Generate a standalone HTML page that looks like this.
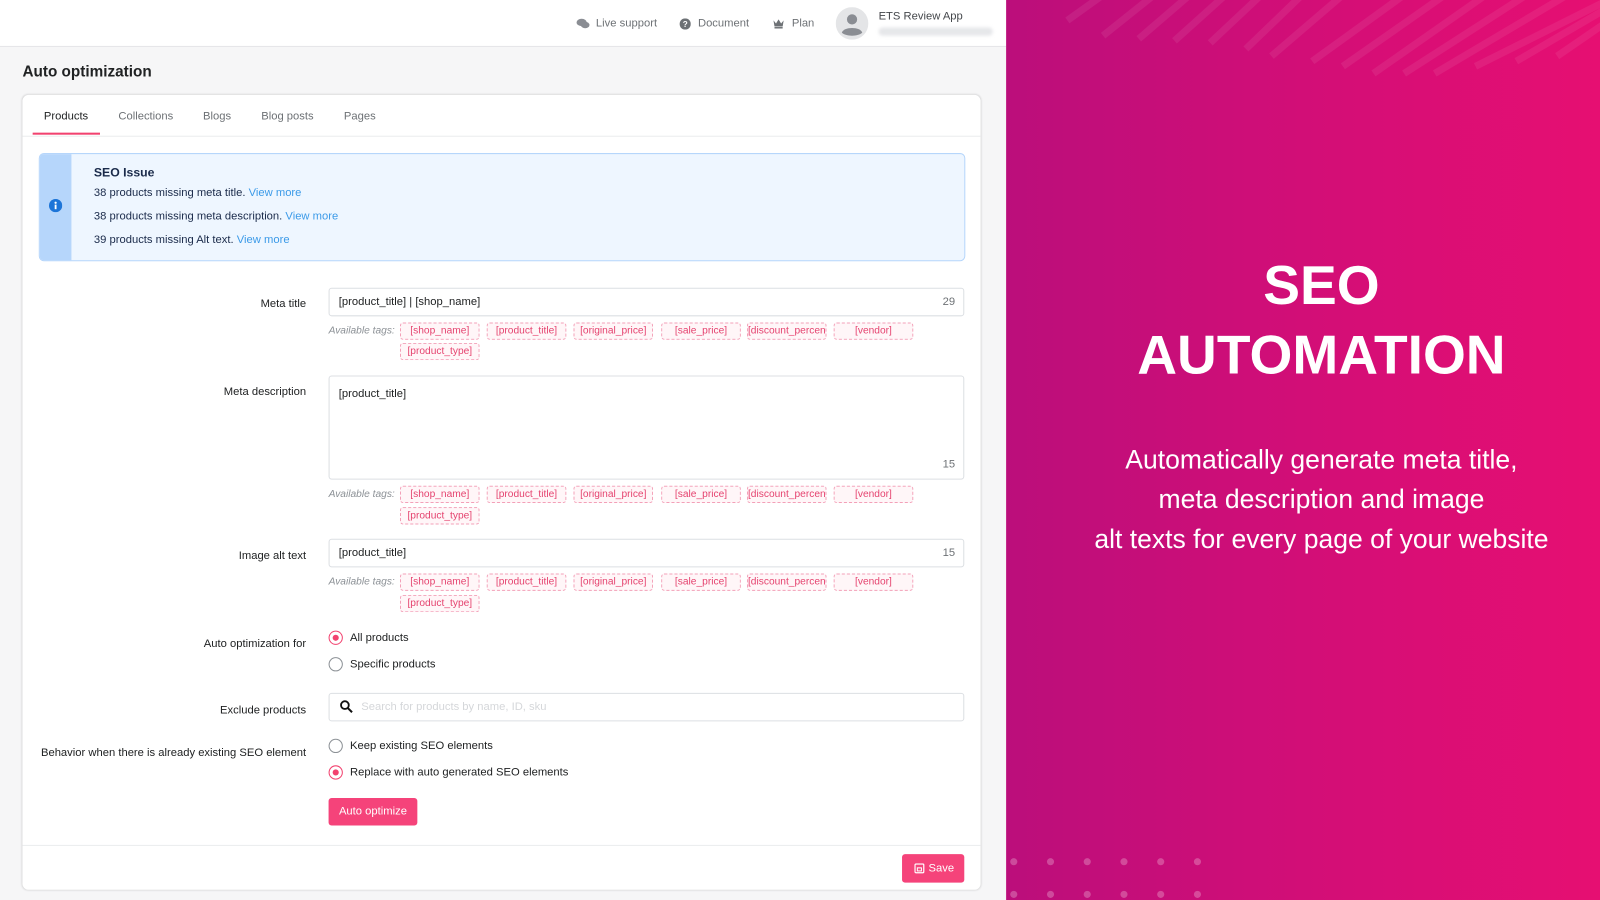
<!DOCTYPE html>
<html><head><meta charset="utf-8">
<style>
*{box-sizing:border-box;margin:0;padding:0}
html,body{width:1600px;height:900px;overflow:hidden;background:#f6f6f7}
#w{position:absolute;left:0;top:0;width:1568px;height:882px;transform:scale(1.020408);transform-origin:0 0;font-family:"Liberation Sans",sans-serif;color:#202223;font-size:11px}
.abs{position:absolute}
.hdr{left:0;top:0;width:986px;height:46px;background:#fff;border-bottom:1px solid #e5e5e8}
.hdr .it{position:absolute;top:17px;color:#6d7175;font-size:11px}
.card{left:22px;top:93px;width:939px;height:779px;background:#fff;border-radius:6px;box-shadow:0 0 2px rgba(0,0,0,.18)}
.tab{position:absolute;top:15px;font-size:11px;color:#6d7175}
.lbl{position:absolute;right:1268px;font-size:11px;color:#202223;text-align:right;white-space:nowrap}
.inp{position:absolute;left:322px;width:623px;border:1px solid #dcdfe3;border-radius:3px;background:#fff;font-size:11px;padding:7px 9px}
.cnt{position:absolute;right:8px;color:#6d7175}
.tags{position:absolute;left:322px;width:600px}
.tags i{position:absolute;left:0;top:3px;color:#8c9196;font-size:10px}
.tg{position:absolute;width:78px;height:17px;border:1px dashed #f3a0b8;border-radius:3px;background:#fff6f8;color:#e5436f;font-size:10px;text-align:center;line-height:15px;overflow:hidden;white-space:nowrap}
.rad{position:absolute;left:322px;font-size:11px}
.rad b{position:absolute;left:0;top:0;width:14px;height:14px;border:1px solid #8c9196;border-radius:50%;background:#fff}
.rad b.on{border:1.5px solid #f2426f}
.rad b.on:after{content:"";position:absolute;left:2.5px;top:2.5px;width:6px;height:6px;border-radius:50%;background:#f2426f}
.rad span{position:absolute;left:21px;top:1px;white-space:nowrap}
.btn{position:absolute;background:#f5437a;color:#fff;border-radius:3px;font-size:11px;text-align:center}
.pink{left:986px;top:0;width:582px;height:882px;background:linear-gradient(90deg,#bb0e7b,#d20e77 50%,#e60f72);overflow:hidden;color:#fff;text-align:center}
.dot{position:absolute;width:7px;height:7px;border-radius:50%;background:rgba(255,255,255,.25)}
</style></head><body><div id="w">
<div class="abs hdr">
  <svg class="abs" style="left:565px;top:18px" width="13" height="11" viewBox="0 0 13 11"><ellipse cx="5" cy="4" rx="5" ry="3.6" fill="#8a8d93"/><ellipse cx="8.5" cy="6.5" rx="4.2" ry="3.2" fill="#8a8d93"/></svg>
  <div class="it" style="left:584px">Live support</div>
  <svg class="abs" style="left:666px;top:18px" width="11" height="11" viewBox="0 0 11 11"><circle cx="5.5" cy="5.5" r="5.5" fill="#6d7175"/><text x="5.5" y="8.5" font-size="8" font-weight="bold" fill="#fff" text-anchor="middle" font-family="Liberation Sans">?</text></svg>
  <div class="it" style="left:684px">Document</div>
  <svg class="abs" style="left:757px;top:18px" width="12" height="10" viewBox="0 0 12 10"><path d="M1 2l2.5 3L6 1l2.5 4L11 2l-1 6H2z" fill="#6d7175"/><rect x="2" y="8.5" width="8" height="1.5" fill="#6d7175"/></svg>
  <div class="it" style="left:776px">Plan</div>
  <svg class="abs" style="left:819px;top:7px" width="32" height="32" viewBox="0 0 32 32"><circle cx="16" cy="16" r="16" fill="#e4e5e7"/><circle cx="16" cy="12" r="5" fill="#8a8d93"/><path d="M6 25c2-6 18-6 20 0c-4 4-16 4-20 0z" fill="#8a8d93"/></svg>
  <div class="abs" style="left:861px;top:10px;font-size:11px;color:#44474b">ETS Review App</div>
  <div class="abs" style="left:861px;top:27px;width:112px;height:8px;background:#e6e7ea;border-radius:4px;filter:blur(1.5px)"></div>
</div>
<div class="abs" style="left:22px;top:62px;font-size:15px;font-weight:bold;color:#202223">Auto optimization</div>
<div class="abs card">
  <div class="tab" style="left:21px;color:#202223">Products</div>
  <div class="abs" style="left:10px;top:37px;width:66px;height:2px;background:#f2426f"></div>
  <div class="tab" style="left:94px">Collections</div>
  <div class="tab" style="left:177px">Blogs</div>
  <div class="tab" style="left:234px">Blog posts</div>
  <div class="tab" style="left:315px">Pages</div>
  <div class="abs" style="left:0;top:40px;width:939px;height:1px;background:#ebecee"></div>
  <div class="abs" style="left:0;top:735px;width:939px;height:1px;background:#ebecee"></div>
</div>
<div class="abs" style="left:38px;top:150px;width:908px;height:106px;border:1px solid #b6d6fb;border-radius:5px;background:#eef6ff;overflow:hidden">
  <div class="abs" style="left:0;top:0;width:31px;height:106px;background:#b6d6fb"></div>
  <svg class="abs" style="left:9px;top:44px" width="13" height="13" viewBox="0 0 13 13"><circle cx="6.5" cy="6.5" r="6.5" fill="#1d75d8"/><rect x="5.6" y="5.5" width="1.8" height="4.5" fill="#fff"/><circle cx="6.5" cy="3.7" r="1.1" fill="#fff"/></svg>
  <div class="abs" style="left:53px;top:11px;font-size:12px;font-weight:bold;color:#1a2a4a">SEO Issue</div>
  <div class="abs" style="left:53px;top:32px;color:#1a2a4a">38 products missing meta title. <span style="color:#3b9ae8">View more</span></div>
  <div class="abs" style="left:53px;top:55px;color:#1a2a4a">38 products missing meta description. <span style="color:#3b9ae8">View more</span></div>
  <div class="abs" style="left:53px;top:78px;color:#1a2a4a">39 products missing Alt text. <span style="color:#3b9ae8">View more</span></div>
</div>

<div class="lbl" style="top:292px">Meta title</div>
<div class="inp" style="top:282px;height:28px">[product_title] | [shop_name]<span class="cnt" style="top:7px">29</span></div>
<div class="tags" style="top:316px"><i>Available tags:</i>
<div class="tg" style="left:70px">[shop_name]</div><div class="tg" style="left:155px">[product_title]</div><div class="tg" style="left:240px">[original_price]</div><div class="tg" style="left:326px">[sale_price]</div><div class="tg" style="left:410px">[discount_percent</div><div class="tg" style="left:495px">[vendor]</div><div class="tg" style="left:70px;top:20px">[product_type]</div></div>

<div class="lbl" style="top:378px">Meta description</div>
<div class="inp" style="top:368px;height:102px;padding-top:11px">[product_title]<span class="cnt" style="top:80px">15</span></div>
<div class="tags" style="top:476px"><i>Available tags:</i>
<div class="tg" style="left:70px">[shop_name]</div><div class="tg" style="left:155px">[product_title]</div><div class="tg" style="left:240px">[original_price]</div><div class="tg" style="left:326px">[sale_price]</div><div class="tg" style="left:410px">[discount_percent</div><div class="tg" style="left:495px">[vendor]</div><div class="tg" style="left:70px;top:21px">[product_type]</div></div>

<div class="lbl" style="top:539px">Image alt text</div>
<div class="inp" style="top:528px;height:28px">[product_title]<span class="cnt" style="top:7px">15</span></div>
<div class="tags" style="top:562px"><i>Available tags:</i>
<div class="tg" style="left:70px">[shop_name]</div><div class="tg" style="left:155px">[product_title]</div><div class="tg" style="left:240px">[original_price]</div><div class="tg" style="left:326px">[sale_price]</div><div class="tg" style="left:410px">[discount_percent</div><div class="tg" style="left:495px">[vendor]</div><div class="tg" style="left:70px;top:21px">[product_type]</div></div>

<div class="lbl" style="top:625px">Auto optimization for</div>
<div class="rad" style="top:618px"><b class="on"></b><span>All products</span></div>
<div class="rad" style="top:644px"><b></b><span>Specific products</span></div>

<div class="lbl" style="top:690px">Exclude products</div>
<div class="inp" style="top:679px;height:28px;padding-left:31px;color:#d5d7da">Search for products by name, ID, sku</div>
<svg class="abs" style="left:333px;top:686px" width="13" height="13" viewBox="0 0 13 13"><circle cx="5" cy="5" r="3.8" fill="none" stroke="#111" stroke-width="1.8"/><path d="M8 8l4 4" stroke="#111" stroke-width="2"/></svg>

<div class="lbl" style="top:732px">Behavior when there is already existing SEO element</div>
<div class="rad" style="top:724px"><b></b><span>Keep existing SEO elements</span></div>
<div class="rad" style="top:750px"><b class="on"></b><span>Replace with auto generated SEO elements</span></div>

<div class="btn" style="left:322px;top:782px;width:87px;height:27px;line-height:27px">Auto optimize</div>
<div class="btn" style="left:884px;top:837px;width:61px;height:28px;line-height:28px;padding-left:16px">Save</div>
<svg class="abs" style="left:896px;top:846px" width="10" height="10" viewBox="0 0 10 10"><rect x=".7" y=".7" width="8.6" height="8.6" rx="1" fill="none" stroke="#fff" stroke-width="1.2"/><rect x="3" y="4.5" width="4" height="3" fill="none" stroke="#fff"/></svg>

<div class="abs pink">
  <svg class="abs" style="left:0;top:0" width="582" height="125">
    <g stroke="rgba(255,255,255,0.07)" stroke-width="7">
      <path d="M60 20L95 -5M95 35L145 -5M130 38L180 -5M165 40L215 -5M200 42L250 -5M235 48L290 -5M260 55L330 -5M300 60L390 -5M330 65L430 -5M360 72L470 -5M390 72L510 -5M420 72L550 -5M460 65L600 -5M500 60L620 -10M540 55L620 0"/>
    </g>
  </svg>
  <div class="abs" style="left:0;width:618px;top:246px;font-size:54px;font-weight:bold;line-height:68px">SEO<br>AUTOMATION</div>
  <div class="abs" style="left:0;width:618px;top:431px;font-size:26px;line-height:39px">Automatically generate meta title,<br>meta description and image<br>alt texts for every page of your website</div>
  <div class="dot" style="left:4px;top:841px"></div><div class="dot" style="left:40px;top:841px"></div><div class="dot" style="left:76px;top:841px"></div><div class="dot" style="left:112px;top:841px"></div><div class="dot" style="left:148px;top:841px"></div><div class="dot" style="left:184px;top:841px"></div>
  <div class="dot" style="left:4px;top:873px"></div><div class="dot" style="left:40px;top:873px"></div><div class="dot" style="left:76px;top:873px"></div><div class="dot" style="left:112px;top:873px"></div><div class="dot" style="left:148px;top:873px"></div><div class="dot" style="left:184px;top:873px"></div>
</div>
</div></body></html>
